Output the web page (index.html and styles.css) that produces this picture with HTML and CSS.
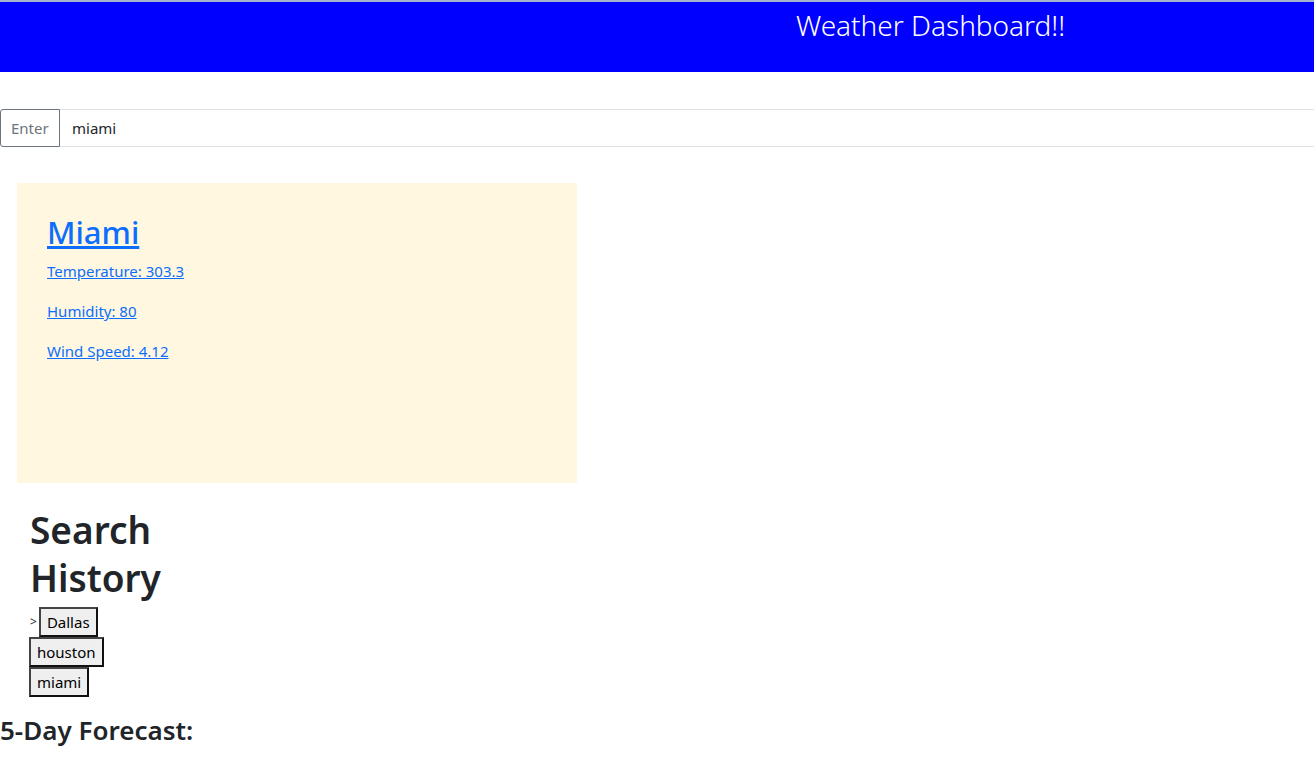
FILE: index.html
```html
<!DOCTYPE html>
<html lang="en">
<head>
<meta charset="utf-8">
<title>Weather Dashboard</title>
<link rel="stylesheet" href="styles.css">
</head>
<body>
<header class="banner">
  <h1 class="banner-title">Weather Dashboard!!</h1>
</header>
<div class="input-group">
  <span class="input-label">Enter</span>
  <input class="city-input" type="text" value="miami">
</div>
<main class="main">
  <section class="current-card">
    <h2 class="city-name"><a href="#">Miami</a></h2>
    <p class="stat"><a href="#">Temperature: 303.3</a></p>
    <p class="stat"><a href="#">Humidity: 80</a></p>
    <p class="stat"><a href="#">Wind Speed: 4.12</a></p>
  </section>
  <section class="history">
    <h1 class="history-title">Search History</h1>
    <div class="history-list">
      <div class="history-row"><span class="caret">&gt;</span><button class="history-btn">Dallas</button></div>
      <div class="history-row"><button class="history-btn">houston</button></div>
      <div class="history-row"><button class="history-btn">miami</button></div>
    </div>
  </section>
</main>
<h3 class="forecast-title">5-Day Forecast:</h3>
</body>
</html>
```
FILE: styles.css
```css
* { box-sizing: border-box; }
html, body {
  margin: 0;
  padding: 0;
  background: #fff;
  font-family: "Noto Sans", "Open Sans", sans-serif;
  color: #212529;
  font-size: 16px;
  line-height: 1.5;
}
.banner {
  background: #0000ff;
  border-top: 2px solid #a3b4cf;
  height: 72px;
  padding-left: 796px;
}
.banner-title {
  margin: 0;
  font-weight: 300;
  font-size: 28px;
  line-height: 46px;
  color: #fff;
}
.input-group {
  display: flex;
  margin-top: 37px;
  height: 38px;
}
.input-label {
  display: flex;
  align-items: center;
  padding: 0 10px;
  width: 60px;
  border: 1px solid #6c757d;
  border-radius: 3px 0 0 3px;
  color: #6c757d;
  font-size: 15px;
}
.city-input {
  flex: 1;
  border: none;
  border-top: 1px solid #dee2e6;
  border-bottom: 1px solid #dee2e6;
  padding: 0 12px;
  font-family: inherit;
  font-size: 15px;
  color: #212529;
  outline: none;
}
.main {
  padding-top: 36px;
}
.current-card {
  margin-left: 17px;
  width: 560px;
  height: 300px;
  background: #fff7df;
  padding: 31px 30px;
}
.city-name {
  margin: 0 0 8px;
  font-size: 31px;
  font-weight: 500;
  line-height: 1.2;
}
.city-name a, .stat a {
  color: #0d6efd;
  text-decoration: underline;
}
.stat {
  margin: 0 0 16px;
  font-size: 15px;
  line-height: 24px;
}
.history {
  padding-left: 29px;
  margin-top: 23px;
}
.history-title {
  margin: 0 0 5px;
  width: 150px;
  font-size: 37px;
  font-weight: 600;
  line-height: 48px;
  padding-left: 1px;
}
.history-list {
  display: flex;
  flex-direction: column;
  align-items: flex-start;
}
.history-row {
  display: flex;
  align-items: center;
}
.caret {
  font-size: 12px;
  margin-left: 1px;
  margin-right: 2px;
}
.history-btn {
  font-family: inherit;
  font-size: 15px;
  line-height: 20px;
  height: 30px;
  padding: 1px 6px;
  background: #efefef;
  color: #000;
  border: 2px solid;
  border-color: #444 #111 #111 #444;
  border-radius: 0;
}
.forecast-title {
  margin: 18px 0 0;
  font-size: 26px;
  font-weight: 600;
  line-height: 1.2;
}
```
